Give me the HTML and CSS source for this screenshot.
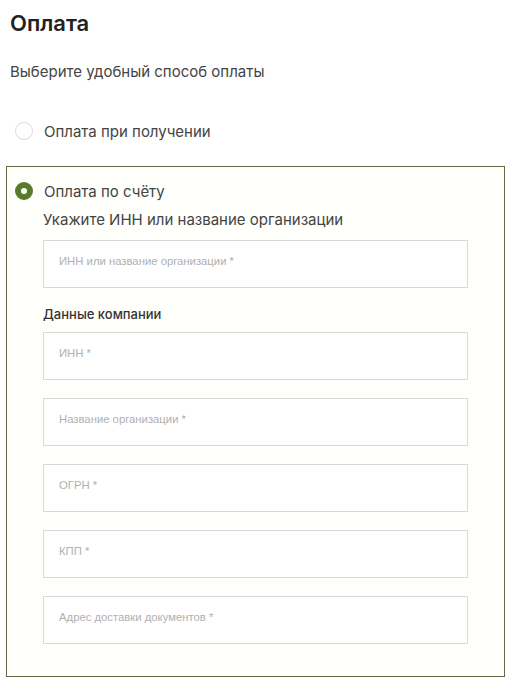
FILE: index.html
```html
<!DOCTYPE html>
<html lang="ru">
<head>
    <meta charset="UTF-8">
    <meta name="viewport" content="width=device-width, initial-scale=1.0">
    <title>Оплата</title>
    <link rel="stylesheet" href="styles.css">
</head>
<body>

<div class="payment">
    <h1 class="payment-title">Оплата</h1>
    <div class="payment-subtitle">Выберите удобный способ оплаты</div>

    <label class="radio-row">
        <span class="radio"></span>
        <span class="radio-label">Оплата при получении</span>
    </label>

    <div class="invoice-box">
        <label class="radio-row">
            <span class="radio radio-checked"></span>
            <span class="radio-label">Оплата по счёту</span>
        </label>

        <div class="invoice-body">
            <div class="invoice-hint">Укажите ИНН или название организации</div>
            <div class="field"><span class="placeholder">ИНН или название организации *</span></div>

            <div class="section-title">Данные компании</div>
            <div class="fields">
                <div class="field"><span class="placeholder">ИНН *</span></div>
                <div class="field"><span class="placeholder">Название организации *</span></div>
                <div class="field"><span class="placeholder">ОГРН *</span></div>
                <div class="field"><span class="placeholder">КПП *</span></div>
                <div class="field"><span class="placeholder">Адрес доставки документов *</span></div>
            </div>
        </div>
    </div>
</div>

</body>
</html>
```

FILE: styles.css
```css
body {
    margin: 0;
    padding: 0;
    background-color: #fff;
    font-family: Inter, Roboto, "Noto Sans", sans-serif;
    color: #333;
}
.payment {
    width: 499px;
    padding: 8px 0 0 6px;
}
.payment-title {
    margin: 0;
    padding-left: 4px;
    font-size: 22px;
    line-height: 30px;
    font-weight: 600;
    color: #222;
}
.payment-subtitle {
    margin-top: 24px;
    padding-left: 4px;
    font-size: 15px;
    line-height: 20px;
    color: #444;
}
.radio-row {
    display: flex;
    align-items: center;
    gap: 11px;
    height: 20px;
    margin-top: 39px;
    padding-left: 9px;
}
.radio {
    width: 16px;
    height: 16px;
    border: 1px solid #dcdcdc;
    border-radius: 50%;
    background: #fff;
    flex-shrink: 0;
}
.radio-checked {
    width: 6px;
    height: 6px;
    border: 6px solid #587a2b;
}
.radio-label {
    font-size: 15px;
    color: #444;
}

.invoice-box {
    margin-top: 25px;
    border: 1px solid #5f6942;
    background-color: #fffffc;
    padding: 14px 36px 32px 0;
}
.invoice-box .radio-row {
    margin-top: 0;
    padding-left: 8px;
}
.invoice-body {
    padding-left: 36px;
}
.invoice-hint {
    margin-top: 9px;
    font-size: 15px;
    line-height: 20px;
    color: #444;
}
.field {
    box-sizing: border-box;
    height: 48px;
    margin-top: 10px;
    border: 1px solid #d9d9d9;
    background: #fff;
    padding: 11px 15px 0;
    line-height: 14px;
}
.placeholder {
    font-family: "Liberation Sans", Arial, sans-serif;
    font-size: 11.3px;
    line-height: 14px;
    color: #b0b0b0;
}
.section-title {
    margin-top: 17px;
    font-size: 13px;
    line-height: 18px;
    font-weight: 500;
    color: #333;
}
.fields {
    display: flex;
    flex-direction: column;
    gap: 18px;
    margin-top: 9px;
}
.fields .field {
    margin-top: 0;
}
```
